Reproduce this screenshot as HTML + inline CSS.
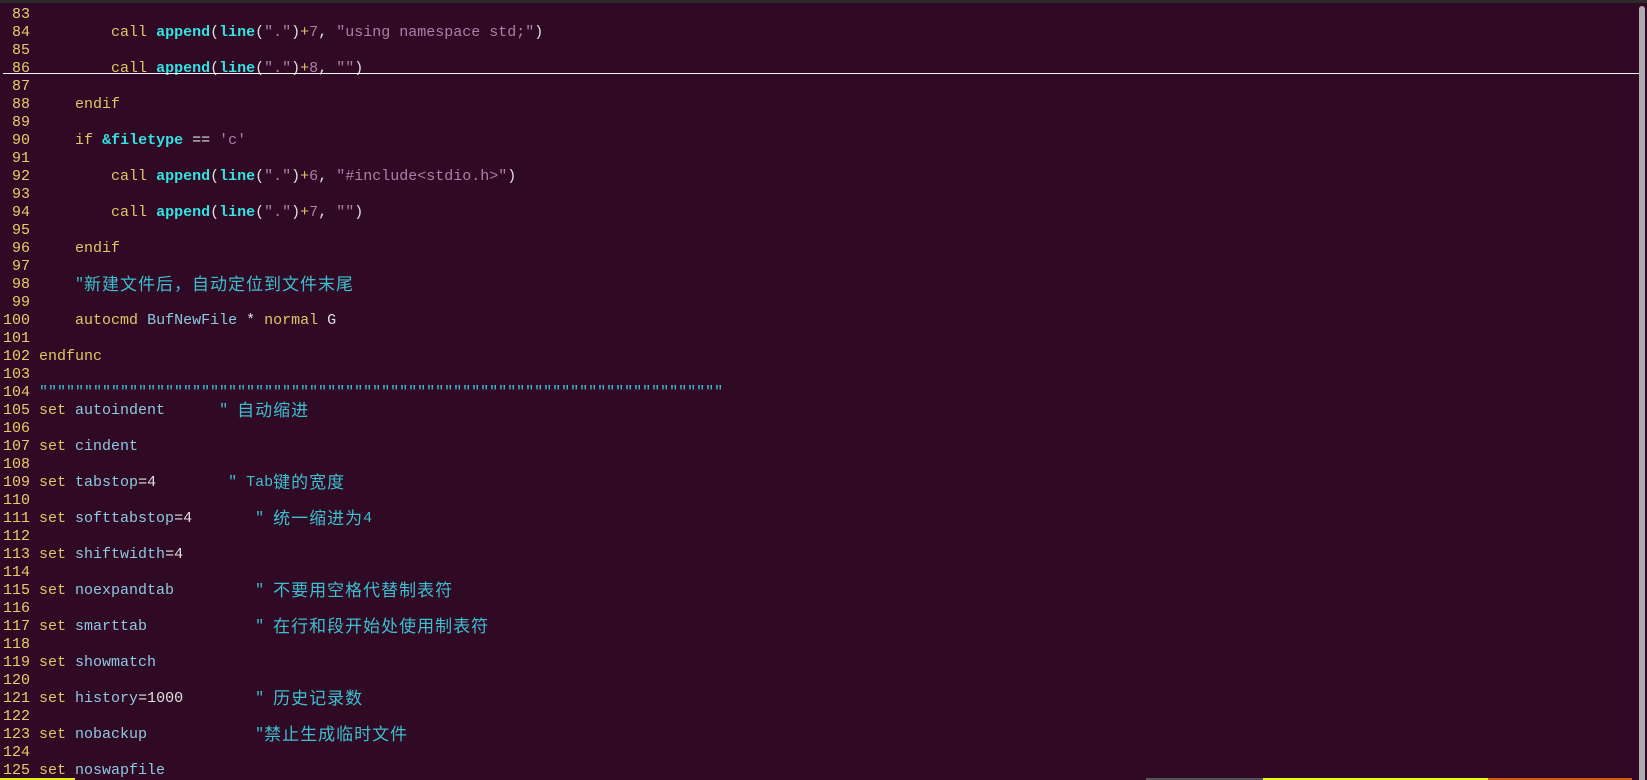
<!DOCTYPE html>
<html><head><meta charset="utf-8"><style>
html,body{margin:0;padding:0;background:#300a24;width:1647px;height:780px;overflow:hidden;position:relative}
.top{position:absolute;left:0;top:0;width:1647px;height:3px;background:#2b2b2b}
#t{position:absolute;left:3px;top:6px;margin:0;font-family:"Liberation Mono","Noto Sans CJK SC",monospace;font-size:15px;line-height:18px;color:#e0e0e0}
#t div{height:18px;white-space:pre;overflow:visible}
.n{color:#ebcb6b}.k{color:#dcc865}.o{color:#8ec8e2}.c{color:#3dbfcf}.f{color:#34e2e2;font-weight:bold}.s{color:#ad7fa8}
.z{font-family:"Noto Sans CJK SC",sans-serif;letter-spacing:1px;font-size:17px;display:inline-block;height:18px;line-height:18px;vertical-align:top;position:relative;top:-2px}
.cur{position:absolute;left:3px;top:73px;width:1637px;height:1px;background:#f4f4f4}
.sb{position:absolute;left:1639px;top:6px;width:6px;height:774px;background:#b0a9b0;border-radius:3px 3px 0 0}
.bar{position:absolute;top:778px;height:2px}
</style></head><body>
<div class="top"></div>
<div id="t">
<div><span class="n"> 83 </span></div>
<div><span class="n"> 84 </span>        <span class="k">call</span> <span class="f">append</span>(<span class="f">line</span>(<span class="s">"."</span>)<span class="k">+</span><span class="s">7</span>, <span class="s">"using namespace std;"</span>)</div>
<div><span class="n"> 85 </span></div>
<div><span class="n"> 86 </span>        <span class="k">call</span> <span class="f">append</span>(<span class="f">line</span>(<span class="s">"."</span>)<span class="k">+</span><span class="s">8</span>, <span class="s">""</span>)</div>
<div><span class="n"> 87 </span></div>
<div><span class="n"> 88 </span>    <span class="k">endif</span></div>
<div><span class="n"> 89 </span></div>
<div><span class="n"> 90 </span>    <span class="k">if</span> <span class="f">&amp;filetype</span> == <span class="s">'c'</span></div>
<div><span class="n"> 91 </span></div>
<div><span class="n"> 92 </span>        <span class="k">call</span> <span class="f">append</span>(<span class="f">line</span>(<span class="s">"."</span>)<span class="k">+</span><span class="s">6</span>, <span class="s">"#include&lt;stdio.h&gt;"</span>)</div>
<div><span class="n"> 93 </span></div>
<div><span class="n"> 94 </span>        <span class="k">call</span> <span class="f">append</span>(<span class="f">line</span>(<span class="s">"."</span>)<span class="k">+</span><span class="s">7</span>, <span class="s">""</span>)</div>
<div><span class="n"> 95 </span></div>
<div><span class="n"> 96 </span>    <span class="k">endif</span></div>
<div><span class="n"> 97 </span></div>
<div><span class="n"> 98 </span>    <span class="c">"<span class="z">新建文件后，自动定位到文件末尾</span></span></div>
<div><span class="n"> 99 </span></div>
<div><span class="n">100 </span>    <span class="k">autocmd</span> <span class="o">BufNewFile</span> * <span class="k">normal</span> G</div>
<div><span class="n">101 </span></div>
<div><span class="n">102 </span><span class="k">endfunc</span></div>
<div><span class="n">103 </span></div>
<div><span class="n">104 </span><span class="c">""""""""""""""""""""""""""""""""""""""""""""""""""""""""""""""""""""""""""""</span></div>
<div><span class="n">105 </span><span class="k">set</span> <span class="o">autoindent</span>      <span class="c">" <span class="z">自动缩进</span></span></div>
<div><span class="n">106 </span></div>
<div><span class="n">107 </span><span class="k">set</span> <span class="o">cindent</span></div>
<div><span class="n">108 </span></div>
<div><span class="n">109 </span><span class="k">set</span> <span class="o">tabstop</span>=4        <span class="c">" Tab<span class="z">键的宽度</span></span></div>
<div><span class="n">110 </span></div>
<div><span class="n">111 </span><span class="k">set</span> <span class="o">softtabstop</span>=4       <span class="c">" <span class="z">统一缩进为</span>4</span></div>
<div><span class="n">112 </span></div>
<div><span class="n">113 </span><span class="k">set</span> <span class="o">shiftwidth</span>=4</div>
<div><span class="n">114 </span></div>
<div><span class="n">115 </span><span class="k">set</span> <span class="o">noexpandtab</span>         <span class="c">" <span class="z">不要用空格代替制表符</span></span></div>
<div><span class="n">116 </span></div>
<div><span class="n">117 </span><span class="k">set</span> <span class="o">smarttab</span>            <span class="c">" <span class="z">在行和段开始处使用制表符</span></span></div>
<div><span class="n">118 </span></div>
<div><span class="n">119 </span><span class="k">set</span> <span class="o">showmatch</span></div>
<div><span class="n">120 </span></div>
<div><span class="n">121 </span><span class="k">set</span> <span class="o">history</span>=1000        <span class="c">" <span class="z">历史记录数</span></span></div>
<div><span class="n">122 </span></div>
<div><span class="n">123 </span><span class="k">set</span> <span class="o">nobackup</span>            <span class="c">"<span class="z">禁止生成临时文件</span></span></div>
<div><span class="n">124 </span></div>
<div><span class="n">125 </span><span class="k">set</span> <span class="o">noswapfile</span></div>
</div>
<div class="cur"></div>
<div class="sb"></div>
<div class="bar" style="left:0;width:75px;background:#e6f020"></div>
<div class="bar" style="left:1146px;width:117px;background:#555"></div>
<div class="bar" style="left:1263px;width:225px;background:#e4ff1c"></div>
<div class="bar" style="left:1488px;width:144px;background:#d45a12"></div>
</body></html>
